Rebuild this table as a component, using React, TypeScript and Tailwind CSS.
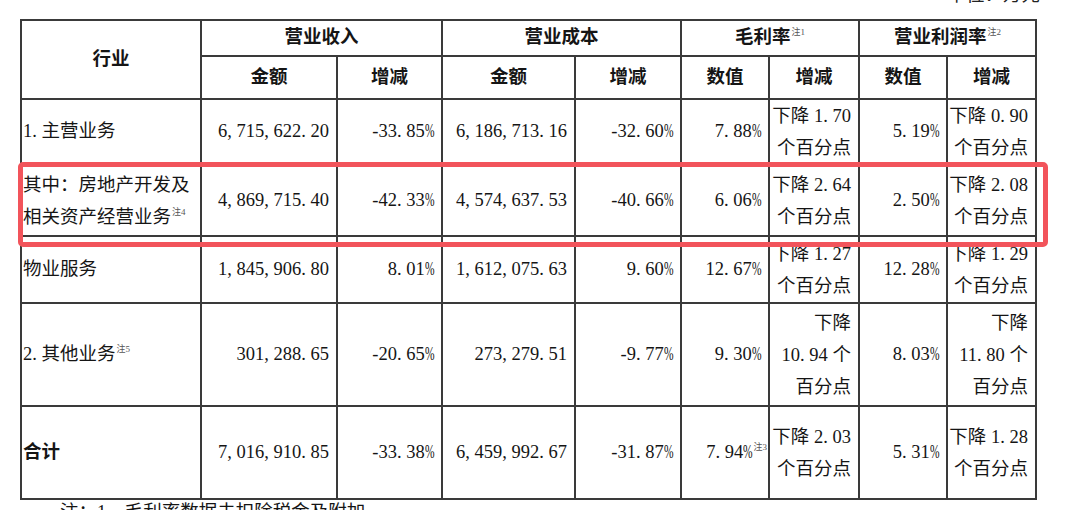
import React from "react";

function T({ s }: { s: string }) {
  const out: React.ReactNode[] = [];
  let buf = "";
  const flush = (k: number) => {
    if (buf) {
      out.push(<React.Fragment key={"t" + k}>{buf}</React.Fragment>);
      buf = "";
    }
  };
  Array.from(s).forEach((c, i) => {
    if (c === "," || c === ".") {
      flush(i);
      out.push(
        <span key={i} className="inline-block w-[0.5em]">
          {c}
        </span>
      );
    } else if (c === "%") {
      flush(i);
      out.push(
        <span key={i} className="inline-block w-[0.5em]">
          <span className="inline-block origin-left scale-x-[0.62]">%</span>
        </span>
      );
    } else {
      buf += c;
    }
  });
  flush(9999);
  return <>{out}</>;
}

function Sup({ n }: { n: string }) {
  return (
    <span className="ml-[1px] align-[8px] text-[9px] font-normal leading-none text-[#555]">
      注{n}
    </span>
  );
}

const cell = "bg-white flex items-center";

function Head({ children, span }: { children: React.ReactNode; span?: boolean }) {
  return (
    <div className={span ? "col-span-2 bg-white flex items-center justify-center font-bold" : "bg-white flex items-center justify-center font-bold"}>
      {children}
    </div>
  );
}

function Num({ v, pr }: { v: React.ReactNode; pr?: boolean }) {
  return (
    <div className={pr ? "bg-white flex items-center justify-end pr-[1px] whitespace-nowrap" : "bg-white flex items-center justify-end pr-[7px] whitespace-nowrap"}>
      {v}
    </div>
  );
}

function Lines({ lines }: { lines: string[] }) {
  return (
    <div className="bg-white flex flex-col justify-center items-end pr-[7px] leading-[32px] whitespace-nowrap">
      {lines.map((l, i) => (
        <div key={i}>
          <T s={l} />
        </div>
      ))}
    </div>
  );
}

type Row = {
  name: React.ReactNode;
  a: string;
  b: string;
  c: string;
  d: string;
  e: React.ReactNode;
  f: string[];
  g: string;
  h: string[];
  ePr?: boolean;
};

const rows: Row[] = [
  {
    name: <T s="1.主营业务" />,
    a: "6,715,622.20",
    b: "-33.85%",
    c: "6,186,713.16",
    d: "-32.60%",
    e: <T s="7.88%" />,
    f: ["下降 1.70", "个百分点"],
    g: "5.19%",
    h: ["下降 0.90", "个百分点"],
  },
  {
    name: (
      <div className="leading-[32px]">
        <div>其中：房地产开发及</div>
        <div>
          相关资产经营业务
          <Sup n="4" />
        </div>
      </div>
    ),
    a: "4,869,715.40",
    b: "-42.33%",
    c: "4,574,637.53",
    d: "-40.66%",
    e: <T s="6.06%" />,
    f: ["下降 2.64", "个百分点"],
    g: "2.50%",
    h: ["下降 2.08", "个百分点"],
  },
  {
    name: "物业服务",
    a: "1,845,906.80",
    b: "8.01%",
    c: "1,612,075.63",
    d: "9.60%",
    e: <T s="12.67%" />,
    f: ["下降 1.27", "个百分点"],
    g: "12.28%",
    h: ["下降 1.29", "个百分点"],
  },
  {
    name: (
      <span>
        <T s="2.其他业务" />
        <Sup n="5" />
      </span>
    ),
    a: "301,288.65",
    b: "-20.65%",
    c: "273,279.51",
    d: "-9.77%",
    e: <T s="9.30%" />,
    f: ["下降", "10.94 个", "百分点"],
    g: "8.03%",
    h: ["下降", "11.80 个", "百分点"],
  },
  {
    name: <span className="font-bold">合计</span>,
    a: "7,016,910.85",
    b: "-33.38%",
    c: "6,459,992.67",
    d: "-31.87%",
    e: (
      <span>
        <T s="7.94%" />
        <Sup n="3" />
      </span>
    ),
    ePr: true,
    f: ["下降 2.03", "个百分点"],
    g: "5.31%",
    h: ["下降 1.28", "个百分点"],
  },
];

export default function App() {
  return (
    <div className="relative w-[1080px] h-[510px] overflow-hidden bg-white text-[#151515] text-[18.5px] font-['Liberation_Serif','Noto_Sans_CJK_SC',serif]">
      <div className="h-[19px] flex justify-end pr-[40px]">
        <div className="-mt-[14px] leading-[19px] text-[#222]">单位：万元</div>
      </div>

      <div className="ml-[20px] grid w-[1017px] grid-cols-[178px_134px_103px_131px_104px_86px_88px_86px_87px] grid-rows-[34px_41px_64px_69px_65px_101px_91px] gap-[2px] border-2 border-[#3a3a3a] bg-[#3a3a3a]">
        <div className="row-span-2 bg-white flex items-center justify-center font-bold">行业</div>
        <Head span>营业收入</Head>
        <Head span>营业成本</Head>
        <Head span>
          <span>
            毛利率
            <Sup n="1" />
          </span>
        </Head>
        <Head span>
          <span>
            营业利润率
            <Sup n="2" />
          </span>
        </Head>
        <Head>金额</Head>
        <Head>增减</Head>
        <Head>金额</Head>
        <Head>增减</Head>
        <Head>数值</Head>
        <Head>增减</Head>
        <Head>数值</Head>
        <Head>增减</Head>

        {rows.map((r, i) => (
          <React.Fragment key={i}>
            <div className={cell + " pl-[1px] whitespace-nowrap"}>{r.name}</div>
            <Num v={<T s={r.a} />} />
            <Num v={<T s={r.b} />} />
            <Num v={<T s={r.c} />} />
            <Num v={<T s={r.d} />} />
            <Num v={r.e} pr={r.ePr} />
            <Lines lines={r.f} />
            <Num v={<T s={r.g} />} />
            <Lines lines={r.h} />
          </React.Fragment>
        ))}
      </div>

      <div className="mt-[3px] pl-[60px] leading-[19px] whitespace-nowrap">
        注：<T s="1" />、毛利率数据未扣除税金及附加
      </div>

      <div className="absolute left-[18px] top-[162px] w-[1030px] h-[85px] rounded-[5px] border-[5px] border-[#f2545b]" />
    </div>
  );
}
